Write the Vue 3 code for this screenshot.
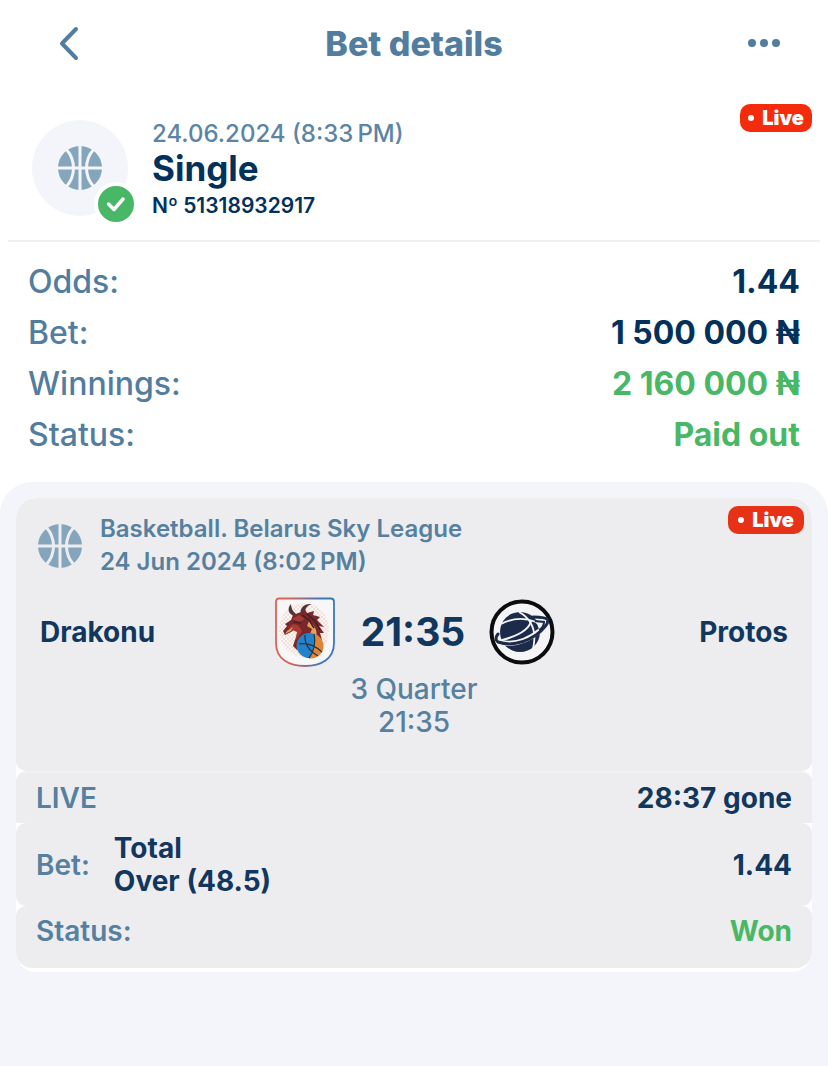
<template>
  <main class="page">
    <header class="top-bar">
      <button class="icon-button" type="button" aria-label="Back">
        <svg width="24" height="40" viewBox="0 0 24 40" fill="none">
          <path d="M20 6L6 20.500L20 35" stroke="currentColor" stroke-width="4" stroke-linecap="round" stroke-linejoin="round"/>
        </svg>
      </button>
      <h1 class="title">Bet details</h1>
      <button class="icon-button" type="button" aria-label="More">
        <svg width="32" height="10" viewBox="0 0 32 10" fill="currentColor">
          <circle cx="4" cy="5" r="4"/>
          <circle cx="16" cy="5" r="4"/>
          <circle cx="28" cy="5" r="4"/>
        </svg>
      </button>
    </header>

    <section class="summary">
      <div class="avatar">
        <svg class="ball" viewBox="0 0 44 44">
          <circle cx="22" cy="22" r="22" fill="currentColor"/>
          <path d="M22 0V44M0 22H44M8 3C18 14 18 30 8 41M36 3C26 14 26 30 36 41" fill="none" stroke="#f3f5fa" stroke-width="3"/>
        </svg>
        <span class="check">
          <svg width="20" height="16" viewBox="0 0 20 16" fill="none">
            <path d="M2.500 8L8 13.500L17 3" stroke="#fff" stroke-width="3.500" stroke-linecap="round" stroke-linejoin="round"/>
          </svg>
        </span>
      </div>
      <div class="summary-info">
        <p class="date">24.06.2024 (8:33&#8201;PM)</p>
        <h2 class="bet-type">Single</h2>
        <p class="number">Nº 51318932917</p>
      </div>
      <span class="live"><i class="live-dot"></i>Live</span>
    </section>

    <dl class="totals">
      <div v-for="row in totals" :key="row.label" class="totals-row">
        <dt>{{ row.label }}</dt>
        <dd :class="{ green: row.green }">{{ row.value }}</dd>
      </div>
    </dl>

    <section class="events">
      <article class="card">
        <div class="match">
          <div class="match-head">
            <svg class="ball" viewBox="0 0 44 44">
              <circle cx="22" cy="22" r="22" fill="currentColor"/>
              <path d="M22 0V44M0 22H44M8 3C18 14 18 30 8 41M36 3C26 14 26 30 36 41" fill="none" stroke="#ededef" stroke-width="3"/>
            </svg>
            <p class="league">Basketball. Belarus Sky League<br>24 Jun 2024 (8:02&#8201;PM)</p>
            <span class="live live-card"><i class="live-dot"></i>Live</span>
          </div>
          <div class="teams">
            <span class="team">Drakonu</span>
            <svg class="logo" width="64" height="72" viewBox="0 0 64 72">
              <defs>
                <linearGradient id="shield" x1="0" y1="0" x2="1" y2="0">
                  <stop offset="0.2" stop-color="#dc6355"/>
                  <stop offset="0.8" stop-color="#3a78b5"/>
                </linearGradient>
                <pattern id="dots" width="4" height="4" patternUnits="userSpaceOnUse">
                  <circle cx="1" cy="1" r="0.7" fill="#efb39a"/>
                  <circle cx="3" cy="3" r="0.7" fill="#efb39a"/>
                </pattern>
              </defs>
              <path d="M6 2.500H58Q61 2.500 61 6V47C61 63 48 70 32 70S3 63 3 47V6Q3 2.500 6 2.500Z" fill="#f8f7f8" stroke="url(#shield)" stroke-width="1.800"/>
              <ellipse cx="31" cy="34" rx="25" ry="27" fill="url(#dots)"/>
              <path d="M29 20C25 14 30 7 39 8C33 10 31 14 32 19M21 20C15 18 14 12 18 8C18 13 21 17 25 19" fill="#4d3539"/>
              <path d="M20 19L28 16L32 13L34 17L41 15L40 19L47 21L44 24L51 31L46 30L51 37L47 37L49 44L44 42L43 49L34 54L24 54L20 50L22 44L27 37L22 33L18 36L12 39L10 35L14 30L12 28L18 24Z" fill="#79272c"/>
              <path d="M19 23L26 19L32 23L26 26ZM15 32L20 28L25 29L29 35L25 41L22 45L24 36Z" fill="#a83a30"/>
              <path d="M14 35L20 31L18 35L12 38ZM36 25C42 29 45 36 43 41L37 38L39 33L34 30Z" fill="#e5a057"/>
              <path d="M29 19L36 24L41 32M34 18L42 25L47 34M21 26L28 27" fill="none" stroke="#421d27" stroke-width="1.500"/>
              <circle cx="38" cy="50" r="12.500" fill="#df8537"/>
              <path d="M41 38A12.500 12.500 0 1 0 36 62C40 57 43 47 41 38Z" fill="#2383ca"/>
              <path d="M41 38C43 46 41 56 36 62M26 48Q38 46 49 56M32 39Q31 52 45 60" fill="none" stroke="#26313d" stroke-width="1.200"/>
            </svg>
            <strong class="score">21:35</strong>
            <svg class="logo" width="66" height="66" viewBox="0 0 66 66">
              <circle cx="33" cy="33" r="30.500" fill="#f5f5f7" stroke="#0b0c0f" stroke-width="4"/>
              <circle cx="31" cy="33" r="20" fill="#1d2b4a"/>
              <path d="M12 25Q29 16 47 23M30 13Q50 24 44 50M47 23Q51 26 51 33" fill="none" stroke="#f5f5f7" stroke-width="1.800"/>
              <path d="M42 21Q41 34 10 42" fill="none" stroke="#f5f5f7" stroke-width="2"/>
              <path d="M8 42Q28 50 52 31Q56 27 58 23" fill="none" stroke="#f5f5f7" stroke-width="5"/>
              <path d="M9 35Q5 40 9 43Q27 49 47 36Q59 27 59 21Q57 18 44 18" fill="none" stroke="#1d2b4a" stroke-width="3" stroke-linecap="round"/>
              <path d="M46 22L55 23Q55 28 50 31" fill="none" stroke="#1d2b4a" stroke-width="2"/>
            </svg>
            <span class="team team-right">Protos</span>
          </div>
          <p class="period">3 Quarter<br>21:35</p>
        </div>
        <div class="card-row card-row-live">
          <span class="label">LIVE</span>
          <span class="value">28:37 gone</span>
        </div>
        <div class="card-row card-row-bet">
          <span class="label">Bet:</span>
          <span class="outcome">Total<br>Over (48.5)</span>
          <span class="value">1.44</span>
        </div>
        <div class="card-row card-row-status">
          <span class="label">Status:</span>
          <span class="value green">Won</span>
        </div>
      </article>
    </section>
  </main>
</template>

<script setup>
const totals = [
  { label: 'Odds:', value: '1.44' },
  { label: 'Bet:', value: '1 500 000 ₦' },
  { label: 'Winnings:', value: '2 160 000 ₦', green: true },
  { label: 'Status:', value: 'Paid out', green: true }
]
</script>

<style>
body {
  margin: 0;
  background-color: #f3f5fa;
}
</style>

<style scoped>
.page {
  min-height: 100vh;
  display: flex;
  flex-direction: column;
  background-color: #fff;
  color: #02315b;
  font-family: Inter, "Liberation Sans", sans-serif;
}

h1,
h2,
p,
dl,
dd {
  margin: 0;
}

.top-bar {
  display: flex;
  align-items: center;
  justify-content: space-between;
  height: 88px;
  padding: 0 40px;
  color: #527d9f;
}

.icon-button {
  display: flex;
  align-items: center;
  justify-content: center;
  width: 48px;
  height: 48px;
  margin: 0 0 2px;
  padding: 0;
  border: 0;
  background: none;
  color: inherit;
  cursor: pointer;
}

.icon-button:first-child {
  width: 56px;
}

.title {
  flex: 1;
  padding-right: 8px;
  font-size: 34px;
  line-height: 40px;
  font-weight: 800;
  text-align: center;
}

.summary {
  display: flex;
  align-items: flex-start;
  margin: 0 8px;
  padding: 16px 8px 16px 24px;
  border-bottom: 2px solid #f0f0f1;
}

.avatar {
  position: relative;
  display: flex;
  align-items: center;
  justify-content: center;
  width: 96px;
  height: 96px;
  margin-top: 16px;
  border-radius: 50%;
  background-color: #f3f5fa;
}

.ball {
  width: 44px;
  height: 44px;
  flex: none;
  color: #85a5bd;
}

.check {
  position: absolute;
  right: -10px;
  bottom: -10px;
  display: flex;
  align-items: center;
  justify-content: center;
  width: 36px;
  height: 36px;
  border: 4px solid #fff;
  border-radius: 50%;
  background-color: #48b766;
}

.summary-info {
  flex: 1;
  margin: 16px 0 0 24px;
}

.date {
  color: #5b84a5;
  font-size: 24px;
  line-height: 28px;
  font-weight: 500;
}

.bet-type {
  font-size: 35px;
  line-height: 40px;
  font-weight: 700;
}

.number {
  font-size: 21px;
  line-height: 36px;
  font-weight: 600;
}

.live {
  display: flex;
  align-items: center;
  justify-content: center;
  gap: 8px;
  width: 72px;
  height: 28px;
  border-radius: 10px;
  background-color: #f42c0b;
  color: #fff;
  font-size: 20px;
  line-height: 28px;
  font-weight: 900;
}

.live-dot {
  width: 6px;
  height: 6px;
  border-radius: 50%;
  background-color: #fff;
}

.totals {
  padding: 14px 28px 22px;
}

.totals-row {
  display: flex;
  justify-content: space-between;
  font-size: 32px;
  line-height: 51px;
}

.totals-row dt {
  color: #527d9f;
  font-weight: 500;
}

.totals-row dd {
  font-weight: 700;
}

.totals-row .green,
.card-row .green {
  color: #48b766;
}

.events {
  flex: 1;
  padding: 16px;
  border-radius: 32px 32px 0 0;
  background-color: #f3f5fa;
}

.card {
  padding-bottom: 4px;
  overflow: hidden;
  border-radius: 20px;
  background-color: #fff;
  color: #11375f;
}

.match {
  padding-bottom: 32px;
  border-radius: 20px 20px 10px 10px;
  background-color: #ededef;
}

.match-head {
  display: flex;
  align-items: flex-start;
  padding: 8px 8px 0 22px;
}

.match-head .ball {
  margin-top: 18px;
}

.league {
  flex: 1;
  margin: 6px 0 0 18px;
  color: #56809f;
  font-size: 24px;
  line-height: 33px;
  font-weight: 600;
}

.live-card {
  width: 76px;
  background-color: #e73218;
}

.teams {
  display: flex;
  align-items: center;
  margin-top: 18px;
  padding: 0 24px;
}

.team {
  flex: 1;
  font-size: 28px;
  line-height: 33px;
  font-weight: 700;
}

.team-right {
  text-align: right;
}

.logo {
  flex: none;
}

.score {
  width: 152px;
  font-size: 39px;
  line-height: 48px;
  font-weight: 700;
  text-align: center;
}

.period {
  margin-top: 5px;
  color: #56809f;
  font-size: 28px;
  line-height: 33px;
  font-weight: 500;
  text-align: center;
}

.card-row {
  display: flex;
  align-items: center;
  padding: 9px 20px 8px;
  border-radius: 10px;
  background-color: #ededef;
  font-size: 28px;
  line-height: 33px;
}

.card-row-live {
  border-top: 2px solid #f2f2f4;
  border-radius: 10px 10px 0 0;
}

.card-row-status {
  padding-bottom: 20px;
  border-radius: 10px 10px 16px 16px;
}

.label {
  color: #56809f;
  font-weight: 600;
}

.outcome {
  margin-left: 24px;
  font-weight: 700;
}

.value {
  margin-left: auto;
  font-weight: 700;
}
</style>
